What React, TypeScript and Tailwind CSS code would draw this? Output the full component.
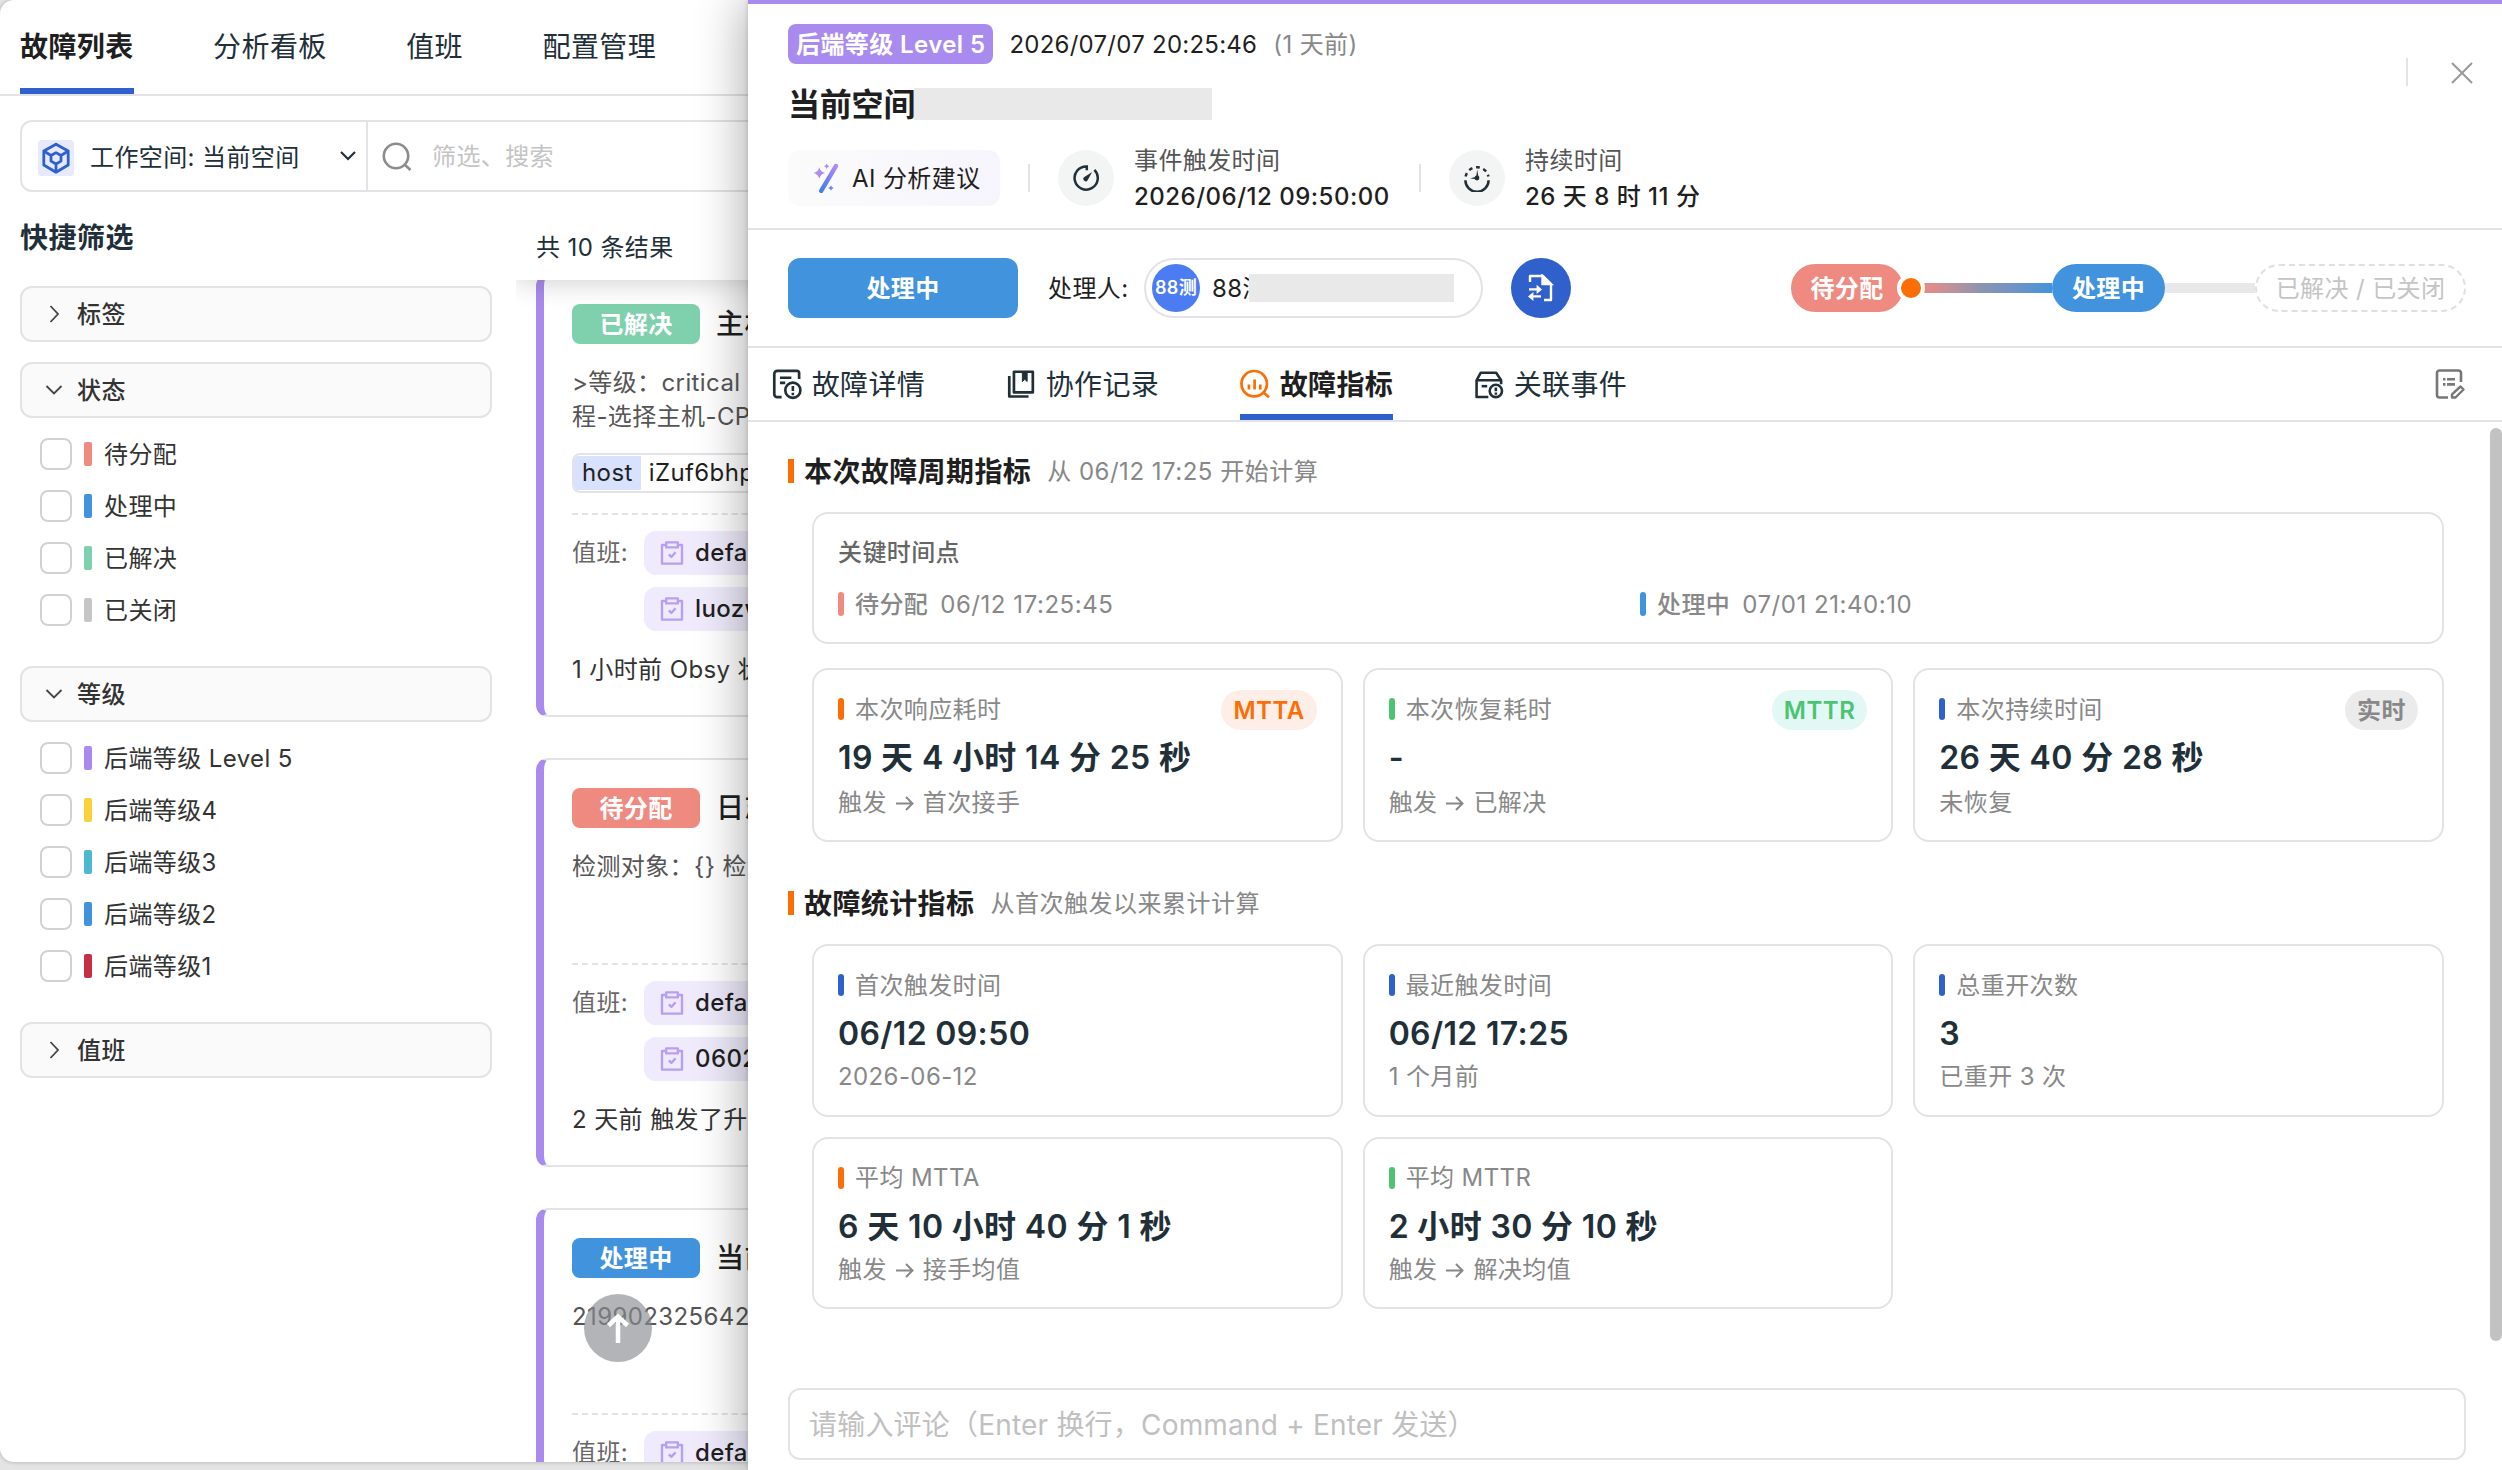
import type { ReactNode } from 'react'
import { clsx } from 'clsx'

type FilterOption = { label: string; color: string }
type Metric = {
  label: string
  value: string
  note: ReactNode
  bar: string
  tag?: { text: string; className: string }
}

const NAV_TABS = ['故障列表', '分析看板', '值班', '配置管理']

const STATUS_OPTIONS: FilterOption[] = [
  { label: '待分配', color: 'bg-[#ee8a80]' },
  { label: '处理中', color: 'bg-[#4093dc]' },
  { label: '已解决', color: 'bg-[#7fd1ae]' },
  { label: '已关闭', color: 'bg-[#c6c6c6]' },
]

const LEVEL_OPTIONS: FilterOption[] = [
  { label: '后端等级 Level 5', color: 'bg-[#a98aee]' },
  { label: '后端等级4', color: 'bg-[#fbd03b]' },
  { label: '后端等级3', color: 'bg-[#4db8d0]' },
  { label: '后端等级2', color: 'bg-[#4093dc]' },
  { label: '后端等级1', color: 'bg-[#c62f45]' },
]

const Arrow = () => (
  <svg className="mx-[9px] h-[18px] w-[18px]" viewBox="0 0 18 18" fill="none" stroke="currentColor" strokeWidth="2">
    <path d="M0 9.5H16.5M10 3l6.5 6.5L10 16" />
  </svg>
)

const CYCLE_METRICS: Metric[] = [
  {
    label: '本次响应耗时',
    value: '19 天 4 小时 14 分 25 秒',
    note: <>触发<Arrow />首次接手</>,
    bar: 'bg-[#fa6e05]',
    tag: { text: 'MTTA', className: 'bg-[#feeee8] text-[#fa6e05]' },
  },
  {
    label: '本次恢复耗时',
    value: '-',
    note: <>触发<Arrow />已解决</>,
    bar: 'bg-[#4cc474]',
    tag: { text: 'MTTR', className: 'bg-[#e2f8f4] text-[#4cc474]' },
  },
  {
    label: '本次持续时间',
    value: '26 天 40 分 28 秒',
    note: '未恢复',
    bar: 'bg-[#2f60cb]',
    tag: { text: '实时', className: 'bg-[#ebebeb] text-[#888888]' },
  },
]

const TOTAL_METRICS: Metric[] = [
  { label: '首次触发时间', value: '06/12 09:50', note: '2026-06-12', bar: 'bg-[#2f60cb]' },
  { label: '最近触发时间', value: '06/12 17:25', note: '1 个月前', bar: 'bg-[#2f60cb]' },
  { label: '总重开次数', value: '3', note: '已重开 3 次', bar: 'bg-[#2f60cb]' },
  { label: '平均 MTTA', value: '6 天 10 小时 40 分 1 秒', note: <>触发<Arrow />接手均值</>, bar: 'bg-[#fa6e05]' },
  { label: '平均 MTTR', value: '2 小时 30 分 10 秒', note: <>触发<Arrow />解决均值</>, bar: 'bg-[#4cc474]' },
]

/* ---------- 图标 ---------- */

const WorkspaceIcon = () => (
  <svg className="h-9 w-9 rounded bg-[#e6eafc]" viewBox="0 0 36 36" fill="none" stroke="#2f60cb" strokeWidth="2.8" strokeLinejoin="round">
    <path d="M18 4.2 30.2 11v14L18 32.2 5.8 25V11Z" />
    <path d="m18 12.6 5 2.9v5.6l-5 2.9-5-2.9v-5.6ZM5.8 11l7.2 4.5M30.2 11 23 15.5M18 24v8" />
  </svg>
)

const SearchIcon = () => (
  <svg className="h-8 w-8" viewBox="0 0 32 32" fill="none" stroke="#8c8c8c" strokeWidth="2.6">
    <circle cx="16" cy="15" r="12.2" />
    <path d="m24.5 23.500 6 5.500" />
  </svg>
)

const Chevron = ({ open }: { open?: boolean }) => (
  <svg className="h-5 w-5" viewBox="0 0 20 20" fill="none" stroke="#444444" strokeWidth="1.8">
    <path d={open ? 'M2.5 6 10 13.5 17.5 6' : 'M6.5 2 14 10l-7.5 8'} />
  </svg>
)

const ClipboardIcon = () => (
  <svg className="h-[26px] w-6" viewBox="0 0 24 26" fill="none" stroke="#b99ff2" strokeWidth="2.4" strokeLinejoin="round">
    <path d="M6 5H2v18.6h20V5h-4" />
    <rect x="6.2" y="2.4" width="11.6" height="5" />
    <path d="m8.8 14.3 2.6 2.6 4.2-4.6" />
  </svg>
)

const MagicIcon = () => (
  <svg className="h-[30px] w-7" viewBox="0 0 28 30">
    <defs>
      <linearGradient id="magic" x1="1" y1="0" x2="0.2" y2="1">
        <stop offset="0" stopColor="#b78cf0" />
        <stop offset="0.6" stopColor="#6d82f5" />
        <stop offset="1" stopColor="#4b7cf0" />
      </linearGradient>
    </defs>
    <path d="M24 3 9.2 27.8" stroke="url(#magic)" strokeWidth="4.4" strokeLinecap="round" />
    <path d="M7.3 4.2q1 4.8 5.8 5.8-4.8 1-5.8 5.8-1-4.8-5.8-5.8 4.8-1 5.8-5.8Z" fill="#b08cf0" />
    <path d="M14.7.6q.5 2.2 2.7 2.7-2.2.5-2.7 2.7-.5-2.2-2.7-2.7 2.2-.5 2.7-2.7Z" fill="#b08cf0" />
    <path d="M19 22.2q.5 2.3 2.8 2.8-2.3.5-2.8 2.8-.5-2.3-2.8-2.8 2.3-.5 2.8-2.8Z" fill="#5a8cf0" />
  </svg>
)

const TriggerIcon = () => (
  <svg className="h-7 w-7" viewBox="0 0 28 28" fill="none" stroke="#212f39" strokeWidth="2.5">
    <path d="M14.8 6.2V2.4A11.6 11.6 0 1 0 22.4 5.8" />
    <path d="M20.2 8 15.6 16.2a2.3 2.3 0 1 1-3.2-3.2Z" fill="#212f39" stroke="none" />
  </svg>
)

const DurationIcon = () => (
  <svg className="h-7 w-7" viewBox="0 0 28 28" fill="none" stroke="#212f39" strokeWidth="2.5">
    <path d="M2.4 16.2a11.6 11.6 0 0 0 23.2 0" />
    <path d="M2.6 12.6a11.6 11.6 0 0 1 22.8 0" strokeDasharray="3.8 3.7" />
    <circle cx="14" cy="14" r="2.4" fill="#212f39" stroke="none" />
    <path d="M13 14 14.2 5.5 15.6 14ZM14 12.8 7 14.2l7 1.2Z" fill="#212f39" stroke="none" />
  </svg>
)

const TransferIcon = () => (
  <svg className="h-7 w-[26px]" viewBox="0 0 26 28" fill="none" stroke="#ffffff" strokeWidth="2.4">
    <path d="M2 8V2h13l8 8v16h-7" strokeLinejoin="round" />
    <path d="M14.5 2v8H23Z" fill="#ffffff" />
    <path d="M1 15.4h9M13 22.4H4" />
    <path d="m8.6 10.8 5.4 4.6-5.4 4.6ZM5.4 18 0 22.4l5.4 4.6Z" fill="#ffffff" stroke="none" />
  </svg>
)

const DetailIcon = () => (
  <svg className="h-8 w-[30px]" viewBox="0 0 30 32" fill="none" stroke="#212f39" strokeWidth="2.7">
    <path d="M27.3 11V4.7a2 2 0 0 0-2-2h-20a3 3 0 0 0-3 3v20.500a3 3 0 0 0 3 3h4.400" />
    <path d="M8 9.700h11.500M8 14.800h5.300" />
    <circle cx="21" cy="22.300" r="7.600" />
    <path d="M21 18v5M21 24.800v2.600" strokeWidth="2.600" />
  </svg>
)

const RecordIcon = () => (
  <svg className="h-8 w-[30px]" viewBox="-1 0 30 32" fill="none" stroke="#212f39" strokeWidth="2.7" strokeLinejoin="round">
    <rect x="7" y="3.700" width="19" height="20.800" />
    <path d="M2.300 8v20.600h19.400" />
    <path d="M15.500 4.500v9l2.400-2.200 2.400 2.200v-9Z" fill="#212f39" strokeWidth="1" />
  </svg>
)

const MetricIcon = () => (
  <svg className="h-8 w-[30px]" viewBox="0 0 30 32" fill="none" stroke="#fa6e05" strokeWidth="2.7">
    <circle cx="14.300" cy="15.700" r="12.800" />
    <path d="m23.500 24.500 5.800 4.800M9 21.500v-5M14.700 21.500v-10M20.400 21.500v-5" />
  </svg>
)

const EventIcon = () => (
  <svg className="h-8 w-[30px]" viewBox="0 0 30 32" fill="none" stroke="#212f39" strokeWidth="2.6" strokeLinejoin="round">
    <path d="M6.700 4.700h15.600l5 7.600H2.600ZM2.600 12.300v16.800h11.800M27.300 12.300v4" />
    <path d="M7.700 18.200h5.600" />
    <circle cx="22" cy="23" r="6.200" />
    <path d="M22 19.600v3.800M22 24.600v2.200" />
  </svg>
)

const EditIcon = () => (
  <svg className="h-8 w-8" viewBox="0 0 32 32" fill="none" stroke="#777777" strokeWidth="2.6">
    <path d="M27 14V5a2.500 2.500 0 0 0-2.500-2.500h-19A2.500 2.500 0 0 0 3 5v22a2.500 2.500 0 0 0 2.500 2.500h8.500" />
    <path d="M9 11.200h2.500M13 11.200h8M9 16.400h2.500M13 16.400h8" />
    <path d="m26.500 18.500 3 3-8 8h-3.500v-3.200Z" strokeLinejoin="round" strokeWidth="2.400" />
  </svg>
)

const DRAWER_TABS = [
  { label: '故障详情', icon: <DetailIcon /> },
  { label: '协作记录', icon: <RecordIcon /> },
  { label: '故障指标', icon: <MetricIcon />, active: true },
  { label: '关联事件', icon: <EventIcon /> },
]

/* ---------- 左侧列表 ---------- */

const FilterGroup = ({ title, options }: { title: string; options?: FilterOption[] }) => (
  <section className={options ? 'mb-10' : 'mb-5'}>
    <div className="flex h-14 items-center gap-[13px] rounded-xl border-2 border-[#e3e3e7] bg-[#fafafa] pl-[22px] font-medium">
      <Chevron open={!!options} />
      <span className="pt-0.5">{title}</span>
    </div>
    {options && (
      <ul className="mt-5 flex flex-col gap-5 pl-5">
        {options.map((option) => (
          <li key={option.label} className="flex h-8 items-center">
            <span className="h-8 w-8 rounded-[8px] border-2 border-[#d2d2d4]" />
            <span className={clsx('ml-3 h-6 w-2 rounded-[2px]', option.color)} />
            <span className="ml-3 pt-0.5">{option.label}</span>
          </li>
        ))}
      </ul>
    )}
  </section>
)

const DutyChip = ({ name }: { name: string }) => (
  <div className="flex h-11 w-[300px] items-center gap-[11px] rounded-xl bg-[#efebfc] pl-4 font-medium text-[#1f1f1f]">
    <ClipboardIcon />
    {name}
  </div>
)

type IncidentCardProps = {
  status: string
  statusColor: string
  title: string
  height: string
  bodyHeight: string
  duties: string[]
  footer?: string
  children: ReactNode
}

const IncidentCard = ({ status, statusColor, title, height, bodyHeight, duties, footer, children }: IncidentCardProps) => (
  <article className={clsx('w-[1900px] shrink-0 rounded-xl border-2 border-l-8 border-[#e3e3e7] border-l-[#a98aee] bg-white pt-7 pl-7', height)}>
    <div className="flex h-10 items-center">
      <span className={clsx('flex h-10 w-32 items-center justify-center rounded-lg pt-0.5 font-semibold text-white', statusColor)}>{status}</span>
      <span className="ml-4 text-[28px] font-medium text-[#1f1f1f]">{title}</span>
    </div>
    <div className={clsx('border-b-2 border-dashed border-[#e3e3e7] pt-[22px] leading-[34px] text-[#555555]', bodyHeight)}>{children}</div>
    <div className="mt-4 flex">
      <span className="mt-[5px] w-[72px] leading-[34px] text-[#666666]">值班:</span>
      <div className="flex flex-col gap-3">
        {duties.map((duty) => (
          <DutyChip key={duty} name={duty} />
        ))}
      </div>
    </div>
    {footer && <p className="mt-[22px] leading-[34px]">{footer}</p>}
  </article>
)

const IncidentList = () => (
  <div className="flex flex-1 flex-col overflow-hidden">
    <div className="z-10 flex h-[88px] shrink-0 items-center bg-white pt-[24px] pl-5 text-[#212f39] shadow-[0_0_28px_rgba(0,0,0,0.22)] [clip-path:inset(0_0_-40px_0)]">
      共 10 条结果
    </div>
    <div className="-mt-1.5 flex flex-1 flex-col gap-[41px] overflow-hidden pl-5">
      <IncidentCard status="已解决" statusColor="bg-[#7fd1ae]" title="主机" height="h-[443px]" bodyHeight="h-[171px]" duties={['default', 'luozw']} footer="1 小时前 Obsy 状态">
        <p>&gt;等级：critical</p>
        <p>程-选择主机-CPU</p>
        <div className="mt-[19px] flex h-10 w-[400px] items-center overflow-hidden rounded-lg border-2 border-[#e3e3e7] text-[#1f1f1f]">
          <span className="bg-[#d8e1fd] px-2">host</span>
          <span className="ml-2">iZuf6bhp</span>
        </div>
      </IncidentCard>
      <IncidentCard status="待分配" statusColor="bg-[#ee8a80]" title="日志" height="h-[409px]" bodyHeight="h-[137px]" duties={['default', '0602']} footer="2 天前 触发了升级">
        <p>检测对象：{'{}'} 检测</p>
      </IncidentCard>
      <IncidentCard status="处理中" statusColor="bg-[#4093dc]" title="当前" height="h-[409px]" bodyHeight="h-[137px]" duties={['default']}>
        <p>2199023256427</p>
      </IncidentCard>
    </div>
  </div>
)

const ListPage = () => (
  <div className="flex h-[1462px] flex-col overflow-hidden rounded-l-[14px] bg-white shadow-[0_0_4px_rgba(0,0,0,0.25)]">
    <nav className="flex h-24 shrink-0 gap-[79.5px] border-b-2 border-[#e3e3e7] pl-5 text-[28px] tracking-[0.4px] text-[#212f39]">
      {NAV_TABS.map((tab, index) => (
        <span key={tab} className={clsx('flex h-[94px] items-center border-b-[6px] pt-1.5', index === 0 ? 'border-[#2f60cb] font-semibold text-[#1f1f1f]' : 'border-transparent')}>
          {tab}
        </span>
      ))}
    </nav>
    <div className="mt-6 ml-5 flex h-[72px] shrink-0 rounded-xl border-2 border-[#e3e3e7]">
      <div className="flex w-[346px] items-center border-r-2 border-[#e3e3e7] pt-[3px] pl-4 text-[#212f39]">
        <WorkspaceIcon />
        <span className="ml-4 flex-1">工作空间: 当前空间</span>
        <svg className="mr-2 mb-[3px] h-5 w-5" viewBox="0 0 20 20" fill="none" stroke="#212f39" strokeWidth="2.2">
          <path d="m3 6 7 7 7-7" />
        </svg>
      </div>
      <div className="flex items-center pt-0.5 pl-3 text-[#c4c4c4]">
        <SearchIcon />
        <span className="ml-5">筛选、搜索</span>
      </div>
    </div>
    <div className="flex min-h-0 flex-1">
      <aside className="w-[516px] shrink-0 pr-6 pl-5">
        <h2 className="mt-[25px] mb-[27px] text-[28px] leading-[42px] font-semibold tracking-[0.5px] text-[#212f39]">快捷筛选</h2>
        <FilterGroup title="标签" />
        <FilterGroup title="状态" options={STATUS_OPTIONS} />
        <FilterGroup title="等级" options={LEVEL_OPTIONS} />
        <FilterGroup title="值班" />
      </aside>
      <IncidentList />
    </div>
  </div>
)

/* ---------- 故障详情抽屉 ---------- */

const TimeInfo = ({ icon, label, value }: { icon: ReactNode; label: string; value: string }) => (
  <div className="flex items-center">
    <span className="flex h-14 w-14 items-center justify-center rounded-full bg-[#f3f5f4] pr-px">{icon}</span>
    <div className="ml-5 min-w-[257px] pt-0.5 leading-9">
      <p className="text-[#555555]">{label}</p>
      <p className="font-medium tracking-[0.5px] text-[#1f1f1f]">{value}</p>
    </div>
  </div>
)

const Divider = () => <span className="h-7 w-0.5 bg-[#e3e3e7]" />

const DrawerHeader = () => (
  <header className="flex h-[226px] shrink-0 border-b-2 border-[#e3e3e7] pt-5 pl-10">
    <div>
      <div className="flex h-10 items-center">
        <span className="flex h-10 items-center rounded-lg bg-[#a98aee] px-2 pt-0.5 font-semibold text-white">后端等级 Level 5</span>
        <span className="ml-4 pt-0.5 tracking-[0.25px] text-[#1f1f1f]">2026/07/07 20:25:46</span>
        <span className="ml-4 pt-0.5 text-[#888888]">(1 天前)</span>
      </div>
      <div className="mt-[18px] flex h-11 items-center text-[32px] font-semibold tracking-[-0.2px] text-[#1f1f1f]">
        <span className="w-[126px] pt-0.5 whitespace-nowrap">当前空间</span>
        <span className="h-8 w-[298px] bg-[#e9e9e9]" />
      </div>
      <div className="mt-[14px] flex h-[76px] items-center">
        <button className="flex h-14 w-[212px] items-center gap-3 rounded-xl bg-gradient-to-r from-[#fbfbfb] to-[#f6f5fd] pl-6 text-[#1f1f1f]">
          <MagicIcon />
          <span className="pt-0.5">AI 分析建议</span>
        </button>
        <div className="ml-7 flex items-center gap-7">
          <Divider />
          <TimeInfo icon={<TriggerIcon />} label="事件触发时间" value="2026/06/12 09:50:00" />
          <Divider />
          <TimeInfo icon={<DurationIcon />} label="持续时间" value="26 天 8 时 11 分" />
        </div>
      </div>
    </div>
    <div className="mt-[34px] mr-[26px] ml-auto flex h-7 items-center gap-10">
      <Divider />
      <svg className="h-7 w-7" viewBox="0 0 28 28" fill="none" stroke="#999999" strokeWidth="2">
        <path d="m4 5 20 20M24 5 4 25" />
      </svg>
    </div>
  </header>
)

const ProcessBar = () => (
  <div className="flex h-[118px] shrink-0 items-center border-b-2 border-[#e3e3e7] pr-9 pl-10">
    <button className="h-[60px] w-[230px] rounded-xl bg-[#4093dc] pt-0.5 font-semibold text-white">处理中</button>
    <span className="ml-[30px] w-[96px] pt-0.5 text-[#1f1f1f]">处理人:</span>
    <div className="flex h-[60px] w-[339px] items-center rounded-full border-2 border-[#e3e3e7] pl-1.5 text-[#1f1f1f]">
      <span className="flex h-12 w-12 items-center justify-center rounded-full bg-[#4b7cf2] text-[18px] font-semibold text-white">88测</span>
      <span className="ml-3 w-[37px] overflow-hidden pt-0.5 whitespace-nowrap">88测</span>
      <span className="h-7 w-[205px] bg-[#e9e9e9]" />
    </div>
    <button className="ml-7 flex h-[60px] w-[60px] items-center justify-center rounded-full bg-[#2f60cb]">
      <TransferIcon />
    </button>

    {/* 状态流转 */}
    <div className="ml-auto flex items-center">
      <span className="flex h-12 w-28 items-center justify-center rounded-full bg-[#ee8a80] pt-0.5 font-semibold text-white">待分配</span>
      <span className="z-10 -ml-1.5 h-7 w-7 rounded-full border-4 border-white bg-[#fa6e05]" />
      <span className="-ml-1 h-2.5 w-[131px] bg-gradient-to-r from-[#ee8a80] via-[#8d93b0] via-45% to-[#4093dc]" />
      <span className="flex h-12 w-[113px] items-center justify-center rounded-full bg-[#4093dc] pt-0.5 font-semibold text-white">处理中</span>
      <span className="h-2.5 w-[90px] bg-[#e8e8ea]" />
      <span className="flex h-12 w-[211px] items-center justify-center rounded-full border-2 border-dashed border-[#e0e0e2] bg-white pt-0.5 text-[#c4c4c4]">已解决 / 已关闭</span>
    </div>
  </div>
)

const DrawerTabs = () => (
  <nav className="flex h-[74px] shrink-0 gap-[81px] border-b-2 border-[#e3e3e7] pl-6 text-[28px] tracking-[0.3px] text-[#212f39]">
    {DRAWER_TABS.map((tab) => (
      <span key={tab.label} className={clsx('flex h-[72px] w-[153px] items-center gap-2.5 border-b-[6px] pt-1.5 whitespace-nowrap', tab.active ? 'border-[#2f60cb] font-semibold text-[#1f1f1f]' : 'border-transparent')}>
        {tab.icon}
        <span className="pt-0.5">{tab.label}</span>
      </span>
    ))}
    <span className="mt-5 mr-9 ml-auto">
      <EditIcon />
    </span>
  </nav>
)

const SectionTitle = ({ title, hint }: { title: string; hint: string }) => (
  <div className="flex h-10 items-center">
    <span className="h-6 w-1.5 bg-[#fa6e05]" />
    <h3 className="ml-2.5 pt-px text-[28px] font-semibold text-[#1f1f1f]">{title}</h3>
    <span className="ml-4 pt-0.5 tracking-[0.5px] text-[#888888]">{hint}</span>
  </div>
)

const KeyTime = ({ label, time, bar }: { label: string; time: string; bar: string }) => (
  <div className="flex h-6 items-center text-[#888888]">
    <span className={clsx('h-6 w-1.5 rounded-[3px]', bar)} />
    <span className="ml-[11px] pt-0.5 font-medium">{label}</span>
    <span className="ml-3 pt-0.5 tracking-[0.55px]">{time}</span>
  </div>
)

const MetricCard = ({ label, value, note, bar, tag }: Metric) => (
  <div className={clsx('rounded-[16px] border-2 border-[#e3e3e7] px-6 pt-5 text-[#888888]', tag ? 'h-[174px]' : 'h-[172.5px]')}>
    <div className="flex h-10 items-center">
      <span className={clsx('mb-0.5 h-[22px] w-1.5 rounded-[3px]', bar)} />
      <span className="mb-px ml-[11px]">{label}</span>
      {tag && <span className={clsx('ml-auto flex h-10 items-center rounded-full px-3 pt-px font-semibold tracking-[0.5px]', tag.className)}>{tag.text}</span>}
    </div>
    <p className="mt-1.5 text-[32px] leading-[44px] font-semibold tracking-[0.35px] text-[#212f39]">{value}</p>
    <p className={clsx('flex h-9 items-center', tag ? 'mt-[5px]' : 'mt-[3px]')}>{note}</p>
  </div>
)

const Drawer = () => (
  <div className="absolute top-0 right-0 z-20 flex h-full w-[1754px] flex-col border-t-4 border-[#a98aee] bg-white shadow-[-6px_0_44px_rgba(0,0,0,0.3),-1px_0_4px_rgba(0,0,0,0.12)]">
    <DrawerHeader />
    <ProcessBar />
    <DrawerTabs />
    <main className="relative flex-1 pt-[29px] pr-[58px] pl-10">
      <SectionTitle title="本次故障周期指标" hint="从 06/12 17:25 开始计算" />
      <div className="mt-[21px] ml-6 h-[132px] rounded-[16px] border-2 border-[#e3e3e7] px-6 pt-[21px]">
        <p className="leading-9 font-medium text-[#666666]">关键时间点</p>
        <div className="mt-[21px] grid grid-cols-2 gap-6">
          <KeyTime label="待分配" time="06/12 17:25:45" bar="bg-[#ee8a80]" />
          <KeyTime label="处理中" time="07/01 21:40:10" bar="bg-[#4093dc]" />
        </div>
      </div>
      <div className="mt-6 ml-6 grid grid-cols-3 gap-5">
        {CYCLE_METRICS.map((metric) => (
          <MetricCard key={metric.label} {...metric} />
        ))}
      </div>
      <div className="mt-[41px]">
        <SectionTitle title="故障统计指标" hint="从首次触发以来累计计算" />
      </div>
      <div className="mt-[21px] ml-6 grid grid-cols-3 gap-5">
        {TOTAL_METRICS.map((metric) => (
          <MetricCard key={metric.label} {...metric} />
        ))}
      </div>
      {/* 滚动条 */}
      <span className="absolute top-1.5 right-0 h-[913px] w-3 rounded-full bg-[#c2c2c2]" />
    </main>
    <div className="mr-9 mb-2.5 ml-10 flex h-[72px] shrink-0 items-center rounded-xl border-2 border-[#e3e3e7] pt-px pl-[19px] text-[28px] tracking-[0.2px] text-[#c0c0c0]">
      请输入评论（Enter 换行，Command + Enter 发送）
    </div>
  </div>
)

const App = () => {
  return (
    <div className="relative h-[1470px] w-[2502px] overflow-hidden bg-[#e4e4e4] font-['Inter','Noto_Sans_CJK_SC',sans-serif] text-[24px] leading-[36px] tracking-[0.4px] text-[#333333]">
      <ListPage />
      {/* 回到顶部 */}
      <button className="absolute top-[1294px] left-[584px] flex h-[68px] w-[68px] items-center justify-center rounded-full bg-[#8b8c92]/65">
        <svg className="h-8 w-8" viewBox="0 0 32 32" fill="none" stroke="#ffffff" strokeWidth="4.5">
          <path d="M16 31V5M6.500 13.500 16 4.500l9.500 9" />
        </svg>
      </button>
      <Drawer />
    </div>
  )
}

export default App
